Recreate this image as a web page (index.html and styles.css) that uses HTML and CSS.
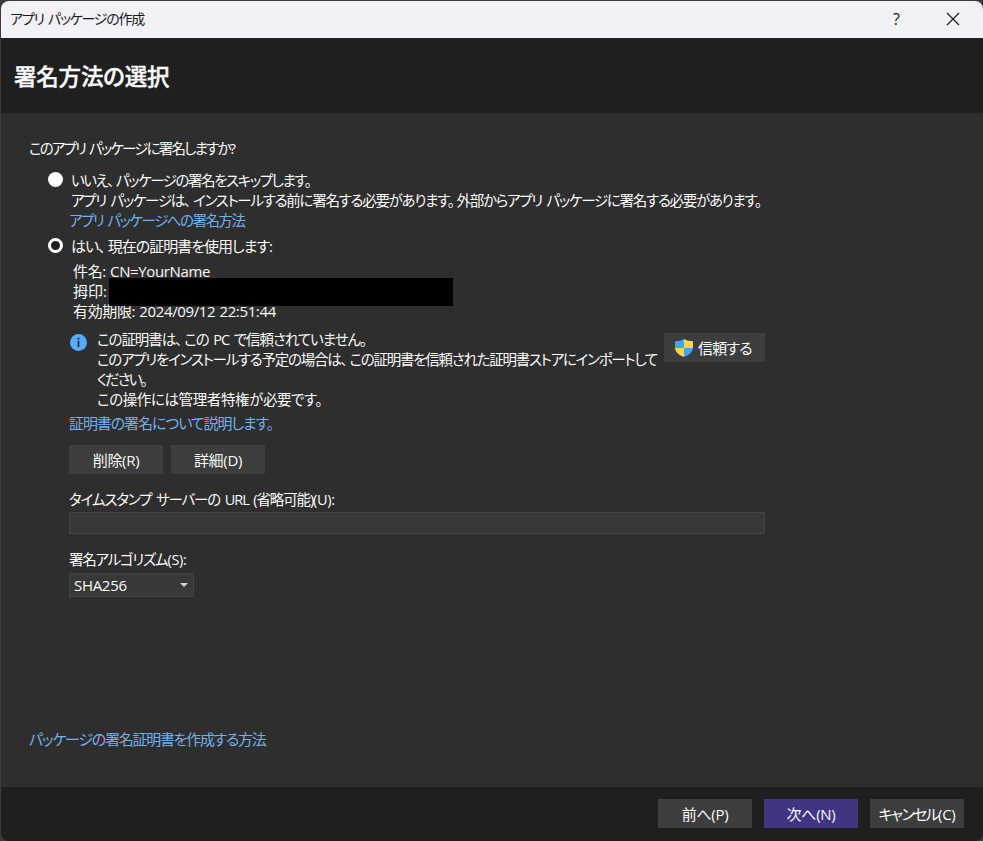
FILE: index.html
```html
<!DOCTYPE html>
<html lang="ja">
<head>
    <meta charset="UTF-8">
    <meta name="viewport" content="width=device-width, initial-scale=1.0">
    <title>アプリ パッケージの作成</title>
    <link rel="stylesheet" href="styles.css">
</head>
<body>
    <div class="window">
        <div class="titlebar">
            <span class="title">アプリ パッケージの作成</span>
            <span class="help">?</span>
            <svg class="close" width="14" height="14" viewBox="0 0 14 14">
                <path d="M1 1L13 13M13 1L1 13" stroke="#1a1a1a" stroke-width="1.2" fill="none"/>
            </svg>
        </div>

        <div class="header">
            <h1>署名方法の選択</h1>
        </div>

        <div class="content">
            <p class="question">このアプリ パッケージに署名しますか<span class="key">?</span></p>

            <div class="option">
                <span class="radio"></span>
                <div class="option-text">
                    <p class="skip">いいえ<span class="comma">、</span>パッケージの署名をスキップします。</p>
                    <p class="skip-note">アプリ パッケージは<span class="comma">、</span>インストールする前に署名する必要があります<span class="comma">。</span>外部からアプリ パッケージに署名する必要があります。</p>
                </div>
            </div>
            <a class="link how-link">アプリ パッケージへの署名方法</a>

            <div class="option option-yes">
                <span class="radio checked"></span>
                <p class="option-text use-cert">はい<span class="comma">、</span>現在の証明書を使用します:</p>
            </div>

            <div class="cert">
                <p class="subject">件名: CN=YourName</p>
                <p class="thumbprint">拇印:<span class="mask"></span></p>
                <p class="expires">有効期限: 2024/09/12 22:51:44</p>
            </div>

            <div class="trust">
                <svg class="info" width="17" height="17" viewBox="0 0 16 16">
                    <circle cx="8" cy="8" r="8" fill="#55aaff"/>
                    <rect x="7.2" y="3.6" width="1.6" height="1.6" fill="#1e1e1e"/>
                    <rect x="7.3" y="6.4" width="1.4" height="6" fill="#1e1e1e"/>
                </svg>
                <div class="trust-text">
                    <p class="trust-state">この証明書は<span class="comma">、</span>この PC で信頼されていません。</p>
                    <p class="trust-import">このアプリをインストールする予定の場合は<span class="comma">、</span>この証明書を信頼された証明書ストアにインポートして</p>
                    <p class="trust-please">ください。</p>
                    <p class="trust-admin">この操作には管理者特権が必要です。</p>
                </div>
                <button type="button" class="trust-button">
                    <svg width="18" height="18" viewBox="0 0 18 18">
                        <path d="M9 0C6.5 1.5 3.5 2.2 0 2.2V9H9Z" fill="#42a5f5"/>
                        <path d="M9 0C11.5 1.5 14.5 2.2 18 2.2V9H9Z" fill="#ffd54f"/>
                        <path d="M0 9C0.5 13 4 16.5 9 18V9Z" fill="#ffd54f"/>
                        <path d="M18 9C17.5 13 14 16.5 9 18V9Z" fill="#42a5f5"/>
                    </svg>
                    <span>信頼する</span>
                </button>
            </div>
            <a class="link explain-link">証明書の署名について説明します。</a>

            <div class="cert-buttons">
                <button type="button">削除(R)</button>
                <button type="button">詳細(D)</button>
            </div>

            <label class="url-label" for="url">タイムスタンプ サーバーの URL (省略可能)<span class="key">(U):</span></label>
            <input type="text" id="url" class="url">

            <p class="algo-label">署名アルゴリズム<span class="key">(S):</span></p>
            <div class="select">
                <span>SHA256</span>
                <svg width="8" height="4" viewBox="0 0 8 4">
                    <path d="M0 0H8L4 4Z" fill="#d6d6d6"/>
                </svg>
            </div>

            <a class="link create-link">パッケージの署名証明書を作成する方法</a>
        </div>

        <div class="footer">
            <button type="button">前へ(P)</button>
            <button type="button" class="primary">次へ(N)</button>
            <button type="button" class="cancel">キャンセル<span class="key">(C)</span></button>
        </div>
    </div>
</body>
</html>
```
FILE: styles.css
```css
* {
    box-sizing: border-box;
}

body {
    margin: 0;
    height: 841px;
    padding: 1px 0 0 1px;
    background-color: #3a3a3a;
    font-family: 'Open Sans', 'Noto Sans CJK JP', sans-serif;
    font-size: 15px;
    line-height: 20px;
    font-feature-settings: "palt";
    color: #fafafa;
    overflow: hidden;
}

p, h1 {
    margin: 0;
    white-space: nowrap;
}

.window {
    display: flex;
    flex-direction: column;
    height: 840px;
    background-color: #2e2e2e;
    border-radius: 8px;
    overflow: hidden;
}

.titlebar {
    display: flex;
    align-items: center;
    height: 37px;
    padding: 0 23px 2px 9px;
    background-color: #f3f0f7;
    color: #1a1a1a;
    font-size: 14px;
}

.title {
    flex: 1;
    letter-spacing: -1.25px;
    word-spacing: 2px;
}

.help {
    margin-right: 46px;
    font-size: 16px;
}

.header {
    height: 75px;
    padding: 24px 13px;
    background-color: #1f1f1f;
}

h1 {
    font-size: 22.5px;
    line-height: 30px;
    font-weight: 500;
    letter-spacing: -0.2px;
    -webkit-text-stroke: 0.4px #fafafa;
}

.content {
    display: flex;
    flex-direction: column;
    align-items: flex-start;
    height: 674px;
    padding: 26px 0 0 28px;
}

.question,
.skip,
.skip-note,
.how-link,
.trust-text,
.url-label,
.algo-label {
    font-size: 14.5px;
    word-spacing: 2px;
}

.question {
    letter-spacing: -1.83px;
}

.key {
    letter-spacing: -0.3px;
}

.comma {
    margin-right: 3px;
}

.option {
    display: flex;
    margin: 12px 0 0 19px;
}

.option-yes {
    margin-top: 5px;
}

.radio {
    width: 15px;
    height: 15px;
    margin: 1px 8px 0 0;
    border-radius: 50%;
    background-color: #fff;
}

.radio.checked {
    margin-top: 2px;
    background-color: #1f1f1f;
    border: 3.5px solid #fff;
}

.link {
    color: #72b0ea;
    white-space: nowrap;
}

.skip {
    letter-spacing: -1.45px;
}

.skip-note {
    letter-spacing: -1.28px;
}

.how-link {
    margin-left: 40px;
    letter-spacing: -1.5px;
}

.use-cert {
    letter-spacing: -1px;
}

.cert {
    margin: 5px 0 0 44px;
}

.subject,
.expires {
    letter-spacing: -0.37px;
    word-spacing: 0.7px;
}

.thumbprint {
    position: relative;
}

.mask {
    position: absolute;
    left: 36px;
    top: -3px;
    z-index: 1;
    width: 344px;
    height: 28px;
    background-color: #000;
}

.trust {
    display: flex;
    align-items: flex-start;
    width: 696px;
    margin: 8px 0 0 40px;
}

.info {
    flex-shrink: 0;
    margin: 5px 10px 0 1px;
}

.trust-text {
    flex: 1;
    min-width: 0;
    padding-top: 1px;
}

.trust-state {
    letter-spacing: -1.07px;
}

.trust-import {
    letter-spacing: -1.26px;
}

.trust-please {
    letter-spacing: -1.9px;
}

.trust-admin {
    letter-spacing: -0.4px;
}

button {
    width: 94px;
    height: 29px;
    padding: 0;
    border: none;
    background-color: #3d3d3d;
    color: #fafafa;
    font: inherit;
    font-feature-settings: inherit;
    letter-spacing: -0.3px;
    white-space: nowrap;
}

.trust-button {
    display: flex;
    flex-shrink: 0;
    align-items: center;
    gap: 5px;
    width: 101px;
    margin-top: 4px;
    padding: 1px 0 0 11px;
    letter-spacing: -0.8px;
}

.trust-button svg {
    flex-shrink: 0;
}

.explain-link {
    margin: 3px 0 0 40px;
    letter-spacing: -1.1px;
}

.cert-buttons {
    display: flex;
    gap: 8px;
    margin: 12px 0 0 40px;
}

.url-label {
    margin: 16px 0 0 40px;
    letter-spacing: -1.12px;
}

.url {
    width: 696px;
    height: 22px;
    margin: 2px 0 0 40px;
    background-color: #383838;
    border: 1px solid #434343;
}

.algo-label {
    margin: 16px 0 0 40px;
    letter-spacing: -1.2px;
}

.select {
    display: flex;
    justify-content: space-between;
    align-items: center;
    width: 125px;
    height: 24px;
    margin: 3px 0 0 40px;
    padding: 0 5px 0 4px;
    background-color: #383838;
    border: 1px solid #434343;
    letter-spacing: -0.3px;
}

.create-link {
    margin-top: 132px;
    letter-spacing: -1.27px;
}

.footer {
    display: flex;
    justify-content: flex-end;
    gap: 12px;
    height: 54px;
    padding: 12px 19px;
    background-color: #1f1f1f;
}

.primary {
    background-color: #413482;
}

.cancel {
    letter-spacing: -1.7px;
}
```
